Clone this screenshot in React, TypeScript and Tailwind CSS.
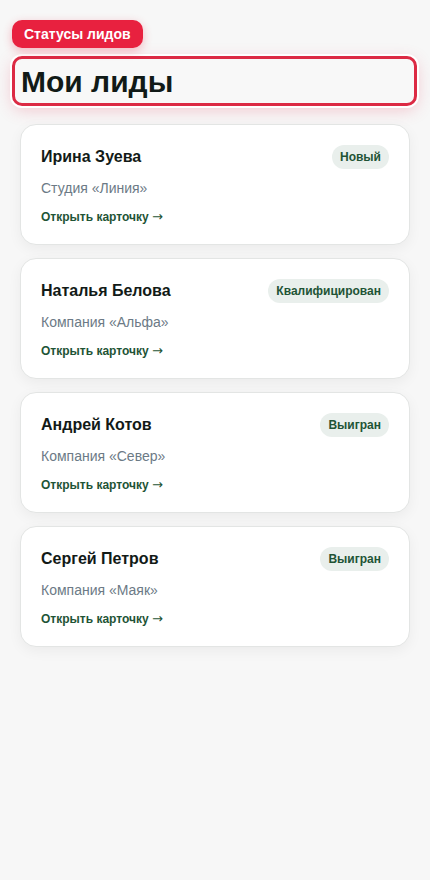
import React from "react";

const leads = [
  { name: "Ирина Зуева", company: "Студия «Линия»", status: "Новый" },
  { name: "Наталья Белова", company: "Компания «Альфа»", status: "Квалифицирован" },
  { name: "Андрей Котов", company: "Компания «Север»", status: "Выигран" },
  { name: "Сергей Петров", company: "Компания «Маяк»", status: "Выигран" },
];

export default function App() {
  return (
    <div className="min-h-[880px] bg-[#f7f7f7] px-3 pt-5 font-['Liberation_Sans',Arial,sans-serif]">
      <div className="flex">
        <span className="rounded-[10px] bg-[#e8213f] px-3 h-7 flex items-center text-[14px] font-bold text-white shadow-[0_3px_10px_rgba(232,33,63,0.3)]">
          Статусы лидов
        </span>
      </div>
      <div className="mt-2 mr-px h-[50px] flex items-center rounded-[10px] border-[3px] border-[#dc2a44] bg-[#f8f8f8] px-[6px] shadow-[0_0_0_2px_#ffffff,0_4px_16px_rgba(232,60,90,0.25)]">
        <h1 className="text-[30px] font-bold text-[#111a17] leading-none pt-[2px]">Мои лиды</h1>
      </div>
      <div className="mx-2 mt-[18px] flex flex-col gap-[13px]">
        {leads.map((l) => (
          <div
            key={l.name}
            className="h-[121px] rounded-[16px] border border-[#e3e5e4] bg-white px-5 pt-5 shadow-[0_4px_14px_rgba(0,0,0,0.05)]"
          >
            <div className="flex items-center justify-between h-6">
              <span className="text-[16px] font-bold text-[#121a17]">{l.name}</span>
              <span className="rounded-full bg-[#e9efec] px-2 h-6 flex items-center text-[12px] font-bold text-[#1f5436]">
                {l.status}
              </span>
            </div>
            <div className="mt-[9px] text-[14px] leading-5 text-[#6c7a86]">{l.company}</div>
            <div className="mt-[9px] text-[12px] leading-5 font-bold text-[#1f5436]">
              Открыть карточку{" "}
              <span className="font-['DejaVu_Sans',sans-serif] font-normal text-[13px]">→</span>
            </div>
          </div>
        ))}
      </div>
    </div>
  );
}
